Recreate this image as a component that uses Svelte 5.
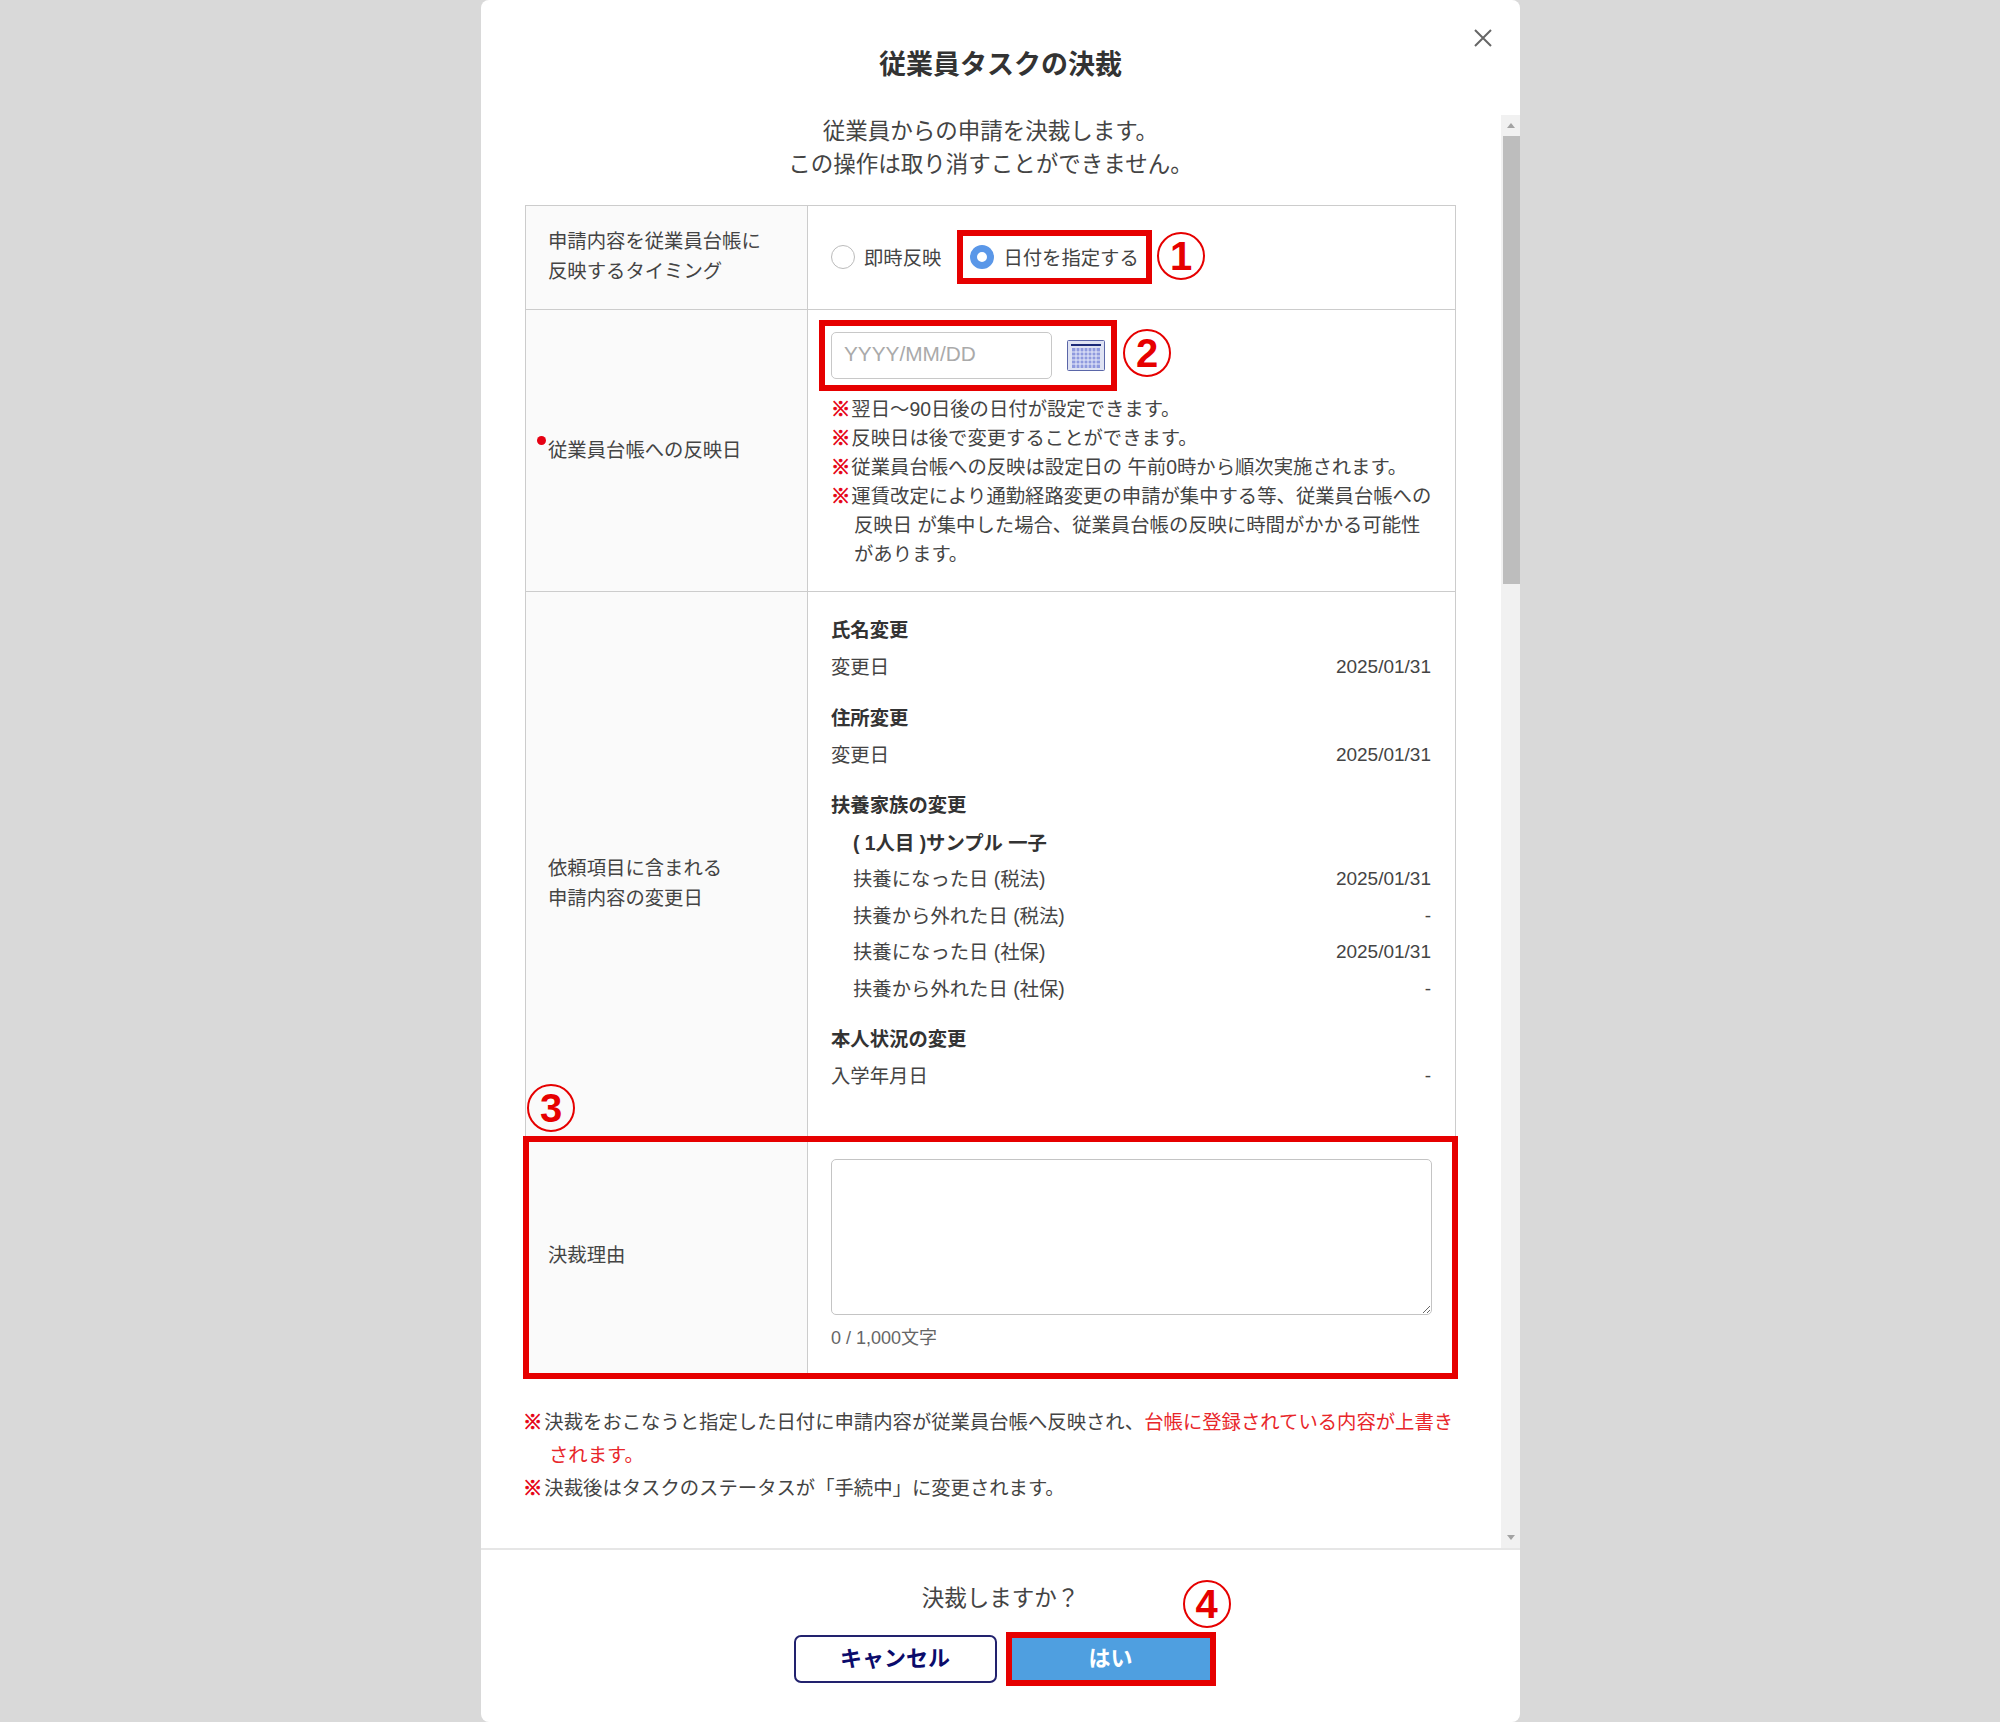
<script>
	const notes = [
		['翌日〜90日後の日付が設定できます。'],
		['反映日は後で変更することができます。'],
		['従業員台帳への反映は設定日の 午前0時から順次実施されます。'],
		['運賃改定により通勤経路変更の申請が集中する等、従業員台帳への', '反映日 が集中した場合、従業員台帳の反映に時間がかかる可能性', 'があります。']
	];

	const groups = [
		{ title: '氏名変更', rows: [{ label: '変更日', value: '2025/01/31' }] },
		{ title: '住所変更', rows: [{ label: '変更日', value: '2025/01/31' }] },
		{
			title: '扶養家族の変更',
			person: '( 1人目 )サンプル 一子',
			rows: [
				{ label: '扶養になった日 (税法)', value: '2025/01/31' },
				{ label: '扶養から外れた日 (税法)', value: '-' },
				{ label: '扶養になった日 (社保)', value: '2025/01/31' },
				{ label: '扶養から外れた日 (社保)', value: '-' }
			]
		},
		{ title: '本人状況の変更', rows: [{ label: '入学年月日', value: '-' }] }
	];
</script>

<div class="page">
	<div class="modal">
		<header class="head">
			<h2>従業員タスクの決裁</h2>
			<button class="close" aria-label="閉じる">
				<svg width="18" height="18" viewBox="0 0 18 18"><path d="M1 1l16 16M17 1L1 17" stroke="#666" stroke-width="2" fill="none" /></svg>
			</button>
		</header>

		<div class="scroll-wrap">
			<div class="content">
				<p class="lead">従業員からの申請を決裁します。<br />この操作は取り消すことができません。</p>

				<div class="table">
					<div class="row row-timing">
						<div class="label timing-label">申請内容を従業員台帳に<br />反映するタイミング</div>
						<div class="cell radios">
							<label class="radio"><span class="dot"></span>即時反映</label>
							<label class="radio selected"><span class="dot on"></span>日付を指定する</label>
							<span class="num num-1">1</span>
						</div>
					</div>

					<div class="row row-date">
						<div class="label required">従業員台帳への反映日</div>
						<div class="cell date-cell">
							<div class="date-line">
								<input class="date" placeholder="YYYY/MM/DD" />
								<svg class="cal" width="38" height="31" viewBox="0 0 38 31">
									<rect x="0.5" y="0.5" width="37" height="30" rx="1" fill="#dfe3f3" stroke="#5a66a8" />
									<rect x="4" y="4" width="30" height="2" fill="#1c2a78" />
									<rect x="5" y="8" width="28" height="20" fill="#8f9ade" />
									<path d="M9 8v20M13 8v20M17 8v20M21 8v20M25 8v20M29 8v20M5 12h28M5 16h28M5 20h28M5 24h28" stroke="#e8ebfa" stroke-width="1" />
								</svg>
								<span class="num num-2">2</span>
							</div>
							<ul class="notes">
								{#each notes as lines}
									<li>
										<span class="mark">※</span>{#each lines as line, i}{#if i > 0}<br />{/if}{line}{/each}
									</li>
								{/each}
							</ul>
						</div>
					</div>

					<div class="row row-dates">
						<div class="label dates-label">依頼項目に含まれる<br />申請内容の変更日</div>
						<div class="cell groups">
							{#each groups as group}
								<section class="group">
									<h3>{group.title}</h3>
									{#if group.person}
										<div class="person">{group.person}</div>
									{/if}
									{#each group.rows as row}
										<div class="pair" class:indent={group.person}>
											<span>{row.label}</span>
											<span class="value">{row.value}</span>
										</div>
									{/each}
								</section>
							{/each}
						</div>
					</div>

					<div class="row row-reason">
						<span class="num num-3">3</span>
						<div class="label reason-label">決裁理由</div>
						<div class="cell reason-cell">
							<textarea class="reason"></textarea>
							<div class="count">0 / 1,000文字</div>
						</div>
					</div>
				</div>

				<div class="foot-notes">
					<p><span class="mark">※</span>決裁をおこなうと指定した日付に申請内容が従業員台帳へ反映され、<span class="warn">台帳に登録されている内容が上書き<br />されます。</span></p>
					<p><span class="mark">※</span>決裁後はタスクのステータスが「手続中」に変更されます。</p>
				</div>
			</div>

			<div class="scrollbar">
				<span class="arrow up"></span>
				<div class="thumb"></div>
				<span class="arrow down"></span>
			</div>
		</div>

		<footer class="foot">
			<p>決裁しますか？</p>
			<div class="buttons">
				<button class="btn cancel">キャンセル</button>
				<div class="yes-wrap">
					<button class="btn yes">はい</button>
					<span class="num num-4">4</span>
				</div>
			</div>
		</footer>
	</div>
</div>

<style>
	:global(body) {
		margin: 0;
		background: #d9d9d9;
	}

	.page {
		display: flex;
		justify-content: center;
		height: 1722px;
		overflow: hidden;
		font-family: "Liberation Sans", "Noto Sans CJK JP", sans-serif;
		font-size: 19.35px;
		color: #444;
	}

	.modal {
		width: 1039px;
		height: 1722px;
		margin-left: 1px;
		background: #fff;
		border-radius: 8px;
		display: flex;
		flex-direction: column;
	}

	.head {
		position: relative;
		height: 115px;
		flex: none;
		box-sizing: border-box;
		padding-top: 47px;
		text-align: center;
	}

	.head h2 {
		margin: 0;
		font-size: 27px;
		line-height: 36px;
		font-weight: 700;
		color: #333;
	}

	.close {
		position: absolute;
		top: 29px;
		right: 28px;
		padding: 0;
		border: 0;
		background: none;
		line-height: 0;
	}

	.scroll-wrap {
		flex: 1;
		min-height: 0;
		display: flex;
	}

	.content {
		flex: 1;
		min-width: 0;
		padding: 0 45px 0 44px;
	}

	.lead {
		margin: 0 0 24px;
		font-size: 22.5px;
		line-height: 33px;
		text-align: center;
	}

	.table {
		border: 1px solid #ccc;
		border-bottom: 0;
	}

	.row {
		position: relative;
		display: grid;
		grid-template-columns: 282px 1fr;
		border-bottom: 1px solid #ccc;
	}

	.row-timing { height: 103px; }
	.row-date { height: 281px; }
	.row-dates { height: 546px; }
	.row-reason { height: 236px; }

	.label {
		display: flex;
		align-items: center;
		box-sizing: border-box;
		padding: 0 22px;
		background: #fafafa;
		border-right: 1px solid #ccc;
		line-height: 30px;
	}

	.timing-label {
		padding-bottom: 3px;
	}

	.dates-label {
		padding-top: 36px;
	}

	.reason-label {
		padding-bottom: 4px;
	}

	.required {
		position: relative;
		padding-bottom: 2px;
	}

	.required::before {
		content: "";
		position: absolute;
		left: 11px;
		top: 126px;
		width: 9px;
		height: 9px;
		border-radius: 50%;
		background: #e60012;
	}

	.cell {
		position: relative;
		padding: 22px 23px 0;
		min-width: 0;
	}

	.radios {
		display: flex;
		align-items: center;
		gap: 29px;
		padding-top: 0;
		padding-bottom: 2px;
	}

	.radio {
		display: flex;
		align-items: center;
		gap: 9px;
	}

	.selected {
		outline: 6px solid #e60000;
		outline-offset: 7px;
	}

	.dot {
		width: 24px;
		height: 24px;
		box-sizing: border-box;
		border: 1px solid #bbb;
		border-radius: 50%;
		background: #fff;
	}

	.dot.on {
		border: 7px solid #5a97e8;
	}

	.num {
		position: absolute;
		width: 48px;
		height: 48px;
		box-sizing: border-box;
		display: flex;
		align-items: center;
		justify-content: center;
		border: 2px solid #e60000;
		border-radius: 50%;
		background: #fff;
		color: #e60000;
		font-size: 40px;
		font-weight: 700;
		line-height: 1;
	}

	.num-1 { left: 349px; top: 26px; }
	.num-2 { left: 292px; top: -3px; }
	.num-3 { left: 1px; top: -55px; background: transparent; }
	.num-4 { left: 171px; top: -58px; }

	.date-cell {
		padding-top: 22px;
	}

	.date-line {
		position: relative;
		display: flex;
		align-items: center;
		gap: 15px;
		width: 274px;
		height: 47px;
		outline: 6px solid #e60000;
		outline-offset: 6px;
	}

	.date {
		width: 221px;
		height: 47px;
		box-sizing: border-box;
		padding: 0 12px 3px;
		border: 1px solid #c8c8c8;
		border-radius: 5px;
		font: inherit;
		font-size: 20.8px;
		color: #444;
	}

	.date::placeholder {
		color: #aaa;
	}

	.notes {
		list-style: none;
		margin: 16px 0 0;
		padding: 0;
		line-height: 29px;
		white-space: nowrap;
	}

	.notes li {
		padding-left: 23px;
		text-indent: -23px;
	}

	.notes .mark {
		letter-spacing: 1px;
	}

	.mark {
		color: #e60012;
		font-weight: 700;
		-webkit-text-stroke: 0.7px #e60012;
	}

	.groups {
		padding-top: 20px;
	}

	.group {
		margin-bottom: 14px;
	}

	.group h3 {
		margin: 0;
		font-size: 19.35px;
		line-height: 37px;
		font-weight: 700;
		color: #333;
	}

	.person {
		margin-top: 1px;
		padding-left: 22px;
		font-weight: 700;
		line-height: 36px;
		color: #333;
	}

	.pair {
		display: flex;
		justify-content: space-between;
		line-height: 36.5px;
		padding-right: 1px;
	}

	.pair .value {
		font-size: 19px;
	}

	.pair.indent {
		padding-left: 22px;
	}

	.reason-cell {
		padding-top: 20px;
	}

	.reason {
		display: block;
		width: 100%;
		height: 156px;
		box-sizing: border-box;
		border: 1px solid #c4c4c4;
		border-radius: 5px;
		font: inherit;
	}

	.count {
		margin-top: 11px;
		font-size: 18px;
		line-height: 24px;
		color: #666;
	}

	.row-reason {
		outline: 6px solid #e60000;
		outline-offset: -3px;
	}

	.foot-notes {
		margin-top: 30px;
		margin-left: -2px;
		margin-right: -4px;
		white-space: nowrap;
		line-height: 33px;
	}

	.foot-notes p {
		margin: 0;
		padding-left: 26px;
		text-indent: -26px;
	}

	.foot-notes .mark {
		letter-spacing: 2px;
	}

	.warn {
		color: #e8262a;
	}

	.scrollbar {
		position: relative;
		flex: none;
		width: 19px;
		background: #f1f1f1;
	}

	.thumb {
		position: absolute;
		top: 21px;
		left: 2px;
		right: 0;
		height: 448px;
		background: #bdbdbd;
	}

	.arrow {
		position: absolute;
		left: 6px;
		border-left: 4px solid transparent;
		border-right: 4px solid transparent;
	}

	.arrow.up {
		top: 8px;
		border-bottom: 5px solid #a3a3a3;
	}

	.arrow.down {
		bottom: 8px;
		border-top: 5px solid #a3a3a3;
	}

	.foot {
		flex: none;
		height: 174px;
		box-sizing: border-box;
		border-top: 2px solid #e6e6e6;
		text-align: center;
		padding-top: 33px;
	}

	.foot p {
		margin: 0;
		font-size: 22.5px;
		line-height: 32px;
	}

	.buttons {
		display: flex;
		justify-content: center;
		align-items: center;
		gap: 15px;
		margin-top: 20px;
		margin-left: 2px;
	}

	.btn {
		box-sizing: border-box;
		padding: 0 0 6px;
		border-radius: 7px;
		font: inherit;
		font-size: 22px;
		font-weight: 700;
	}

	.cancel {
		width: 203px;
		height: 48px;
		background: #fff;
		border: 2px solid #22226e;
		color: #0b0b6b;
	}

	.yes-wrap {
		position: relative;
	}

	.yes {
		display: block;
		width: 198px;
		height: 42px;
		background: #4f9fe0;
		border: 0;
		border-radius: 0;
		color: #fff;
		outline: 6px solid #e60000;
		outline-offset: 0;
	}
</style>
